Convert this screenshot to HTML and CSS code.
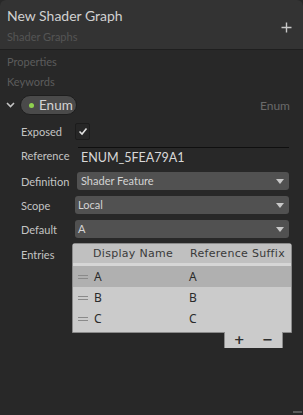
FILE: index.html
```html
<!DOCTYPE html>
<html lang="en">
<head>
    <meta charset="UTF-8">
    <meta name="viewport" content="width=device-width, initial-scale=1.0">
    <title>New Shader Graph</title>
    <link rel="stylesheet" href="styles.css">
</head>
<body>
    <div class="panel">
        <header class="head">
            <div class="head-text">
                <div class="title">New Shader Graph</div>
                <div class="subtitle">Shader Graphs</div>
            </div>
            <svg class="add" width="11" height="11" viewBox="0 0 11 11"><path d="M5.5 0.5 V10.5 M0.5 5.5 H10.5" stroke="#c8c8c8" stroke-width="1.4"/></svg>
        </header>

        <div class="sections">
            <div class="section">Properties</div>
            <div class="section">Keywords</div>
        </div>

        <div class="item">
            <svg class="chevron" width="9" height="6" viewBox="0 0 9 6"><path d="M1 1 L4.5 4.5 L8 1" fill="none" stroke="#c4c4c4" stroke-width="1.6"/></svg>
            <div class="pill"><span class="dot"></span>Enum</div>
            <span class="item-type">Enum</span>
        </div>

        <div class="fields">
            <div class="row">
                <label>Exposed</label>
                <div class="check">
                    <svg width="10" height="9" viewBox="0 0 10 9"><path d="M1.5 4.5 L4 7 L8.5 1.5" fill="none" stroke="#e0e0e0" stroke-width="1.6"/></svg>
                </div>
            </div>
            <div class="row">
                <label>Reference</label>
                <div class="text-field">ENUM_5FEA79A1</div>
            </div>
            <div class="row definition">
                <label>Definition</label>
                <div class="dropdown">Shader Feature<span class="arrow"></span></div>
            </div>
            <div class="row">
                <label>Scope</label>
                <div class="dropdown">Local<span class="arrow"></span></div>
            </div>
            <div class="row">
                <label>Default</label>
                <div class="dropdown">A<span class="arrow"></span></div>
            </div>
            <div class="row entries">
                <label>Entries</label>
                <div class="list-wrap">
                    <div class="list">
                        <div class="list-head">
                            <span class="col-name">Display Name</span>
                            <span class="col-ref">Reference Suffix</span>
                        </div>
                        <div class="list-row selected"><span class="handle"></span><span class="col-name">A</span><span class="col-ref">A</span></div>
                        <div class="list-row"><span class="handle"></span><span class="col-name">B</span><span class="col-ref">B</span></div>
                        <div class="list-row"><span class="handle"></span><span class="col-name">C</span><span class="col-ref">C</span></div>
                    </div>
                    <div class="list-foot">
                        <span>+</span>
                        <span>&minus;</span>
                    </div>
                </div>
            </div>
        </div>
        <div class="grip"></div>
    </div>
</body>
</html>
```

FILE: styles.css
```css
body {
    margin: 0;
    padding: 0;
    background-color: #282828;
    font-family: Lato, 'Noto Sans', sans-serif;
    font-size: 11px;
}

.panel {
    position: relative;
    width: 303px;
    height: 415px;
    background-color: #282828;
    border-radius: 6px 6px 0 0;
    overflow: hidden;
}

.head {
    display: flex;
    align-items: flex-start;
    justify-content: space-between;
    height: 50px;
    background-color: #333333;
    border-bottom: 1px solid #1f1f1f;
    box-sizing: border-box;
    padding: 4px 11px 0 7px;
}

.title {
    color: #d0d0d0;
    font-size: 14px;
    line-height: 24px;
}

.subtitle {
    color: #555555;
    font-size: 11px;
    line-height: 18px;
}

.add {
    margin-top: 18px;
}

.sections {
    padding-top: 2px;
}

.section {
    color: #5c5c5c;
    font-size: 11px;
    height: 20px;
    line-height: 20px;
    padding-left: 7px;
}

.item {
    display: flex;
    align-items: center;
    height: 24px;
    margin-top: 1px;
    padding-left: 6px;
    padding-right: 13px;
}

.chevron {
    margin-right: 5px;
}

.pill {
    display: flex;
    align-items: center;
    height: 18px;
    width: 38px;
    padding: 0 9px 0 8px;
    background-color: #4a4a4a;
    border: 1px solid #1e1e1e;
    border-radius: 11px;
    color: #d4d4d4;
    font-size: 13.5px;
}

.dot {
    width: 5px;
    height: 5px;
    border-radius: 50%;
    background-color: #8fd14f;
    margin-right: 5px;
    flex-shrink: 0;
}

.item-type {
    margin-left: auto;
    color: #6a6a6a;
    font-size: 12px;
}

.fields {
    padding: 2px 14px 0 21px;
}

.row {
    display: flex;
    align-items: center;
    height: 24px;
}

.row label {
    width: 54px;
    color: #c4c4c4;
    font-size: 11px;
    flex-shrink: 0;
}

.check {
    width: 13px;
    height: 15px;
    display: flex;
    align-items: center;
    justify-content: center;
    background-color: #262626;
    border: 1px solid #1c1c1c;
    border-radius: 2px;
}

.text-field {
    flex: 1;
    margin-left: 3px;
    height: 20px;
    line-height: 20px;
    padding-left: 3px;
    color: #d8d8d8;
    font-size: 12.5px;
    border-top: 1px solid #0f0f0f;
    margin-top: 4px;
}

.dropdown {
    position: relative;
    flex: 1;
    height: 18px;
    line-height: 18px;
    padding-left: 3px;
    background-color: #515151;
    border-radius: 3px;
    color: #d4d4d4;
    font-size: 11px;
}

.row.definition {
    margin-top: 2px;
}

.row.definition .dropdown {
    margin-left: 2px;
    padding-left: 4px;
}

.arrow {
    position: absolute;
    right: 5px;
    top: 7px;
    border-left: 4px solid transparent;
    border-right: 4px solid transparent;
    border-top: 5px solid #c8c8c8;
}

.row.entries {
    align-items: flex-start;
    height: auto;
    margin-top: 2px;
}

.row.entries label {
    width: 51px;
    line-height: 20px;
    padding-top: 2px;
}

.list-wrap {
    flex: 1;
    margin-right: -3px;
    display: flex;
    flex-direction: column;
    align-items: flex-end;
}

.list {
    width: 100%;
    background-color: #cbcbcb;
    border: 1px solid #8a8a8a;
    border-radius: 3px 3px 0 0;
    box-sizing: border-box;
    color: #2a2a2a;
    padding-bottom: 3px;
}

.list-head {
    display: flex;
    height: 19px;
    line-height: 19px;
    background-color: #c0c0c0;
    border-bottom: 3px solid #d6d6d6;
    color: #3a3a3a;
    font-family: 'DejaVu Sans', sans-serif;
    font-size: 11px;
    letter-spacing: 0.3px;
}

.list-head .col-name {
    padding-left: 20px;
    width: 97px;
}

.list-row {
    display: flex;
    align-items: center;
    height: 21px;
    font-family: 'Noto Sans', sans-serif;
    font-size: 12px;
}

.list-row.selected {
    background-color: #b0b0b0;
}

.list-row .col-name {
    width: 95px;
}

.handle {
    width: 10px;
    height: 4px;
    border-top: 1px solid #8a8a8a;
    border-bottom: 1px solid #8a8a8a;
    margin: 0 6px 0 5px;
    box-sizing: border-box;
}

.list-foot {
    display: flex;
    justify-content: space-around;
    width: 57px;
    height: 16px;
    margin-right: 9px;
    background-color: #cbcbcb;
    border-left: 1px solid #8a8a8a;
    border-right: 1px solid #8a8a8a;
    color: #2e2e2e;
    font-family: 'DejaVu Sans', sans-serif;
    font-size: 13px;
    font-weight: bold;
    line-height: 16px;
    margin-top: -1px;
}

.grip {
    position: absolute;
    right: 1px;
    bottom: 2px;
    width: 9px;
    height: 2px;
    background-color: #5a5a5a;
}
```
